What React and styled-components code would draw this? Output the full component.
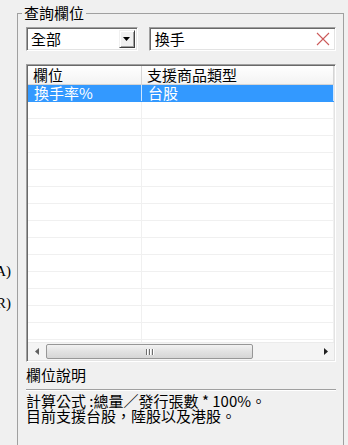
import React from "react";
import styled, { createGlobalStyle } from "styled-components";

const GlobalStyle = createGlobalStyle`
  html, body {
    margin: 0;
    padding: 0;
    background: #f0f0f0;
  }
  body {
    font-family: "Noto Sans CJK TC", "Liberation Sans", sans-serif;
    font-size: 15px;
    color: #000;
  }
`;

const Page = styled.div`
  display: flex;
  width: 348px;
  height: 445px;
  overflow: hidden;
`;

const SideColumn = styled.div`
  flex: none;
  width: 17px;
  display: flex;
  flex-direction: column;
  gap: 14px;
  padding-top: 262px;
  box-sizing: border-box;
`;

const SideLabel = styled.div`
  display: flex;
  justify-content: flex-end;
  overflow: hidden;
  width: 11px;
  height: 18px;
  line-height: 18px;
  white-space: nowrap;
  font-family: "Liberation Serif", serif;
  font-size: 15px;
`;

const GroupBox = styled.fieldset`
  flex: none;
  width: 327px;
  height: 460px;
  box-sizing: border-box;
  margin: 4px 0 0 0;
  padding: 5px 7px 0 8px;
  border: 1px solid #a0a0a0;
  min-width: 0;
`;

const Legend = styled.legend`
  margin-left: -4px;
  padding: 0 2px;
  line-height: 18px;
  font-size: 15px;
`;

const Toolbar = styled.div`
  display: flex;
  gap: 11px;
  height: 24px;
`;

const Sunken = styled.div`
  box-sizing: border-box;
  height: 24px;
  display: flex;
  align-items: center;
  background: #fff;
  border-top: 1px solid #a0a0a0;
  border-left: 1px solid #a0a0a0;
  border-right: 1px solid #fff;
  border-bottom: 1px solid #fff;
  box-shadow: inset 1px 1px 0 #696969, inset -1px -1px 0 #e3e3e3;
`;

const Combo = styled(Sunken)`
  width: 112px;
  padding: 2px 2px 2px 4px;
`;

const SearchBox = styled(Sunken)`
  width: 188px;
  padding: 2px 5px 2px 5px;
`;

const FieldText = styled.span`
  flex: 1;
  line-height: 18px;
`;

const DropButton = styled.div`
  width: 16px;
  height: 18px;
  box-sizing: border-box;
  background: #f0f0f0;
  border-top: 1px solid #f0f0f0;
  border-left: 1px solid #f0f0f0;
  border-right: 1px solid #404040;
  border-bottom: 1px solid #404040;
  box-shadow: inset 1px 1px 0 #fff, inset -1px -1px 0 #a0a0a0;
  display: flex;
  align-items: center;
  justify-content: center;
`;

const ListView = styled.div`
  margin-top: 13px;
  width: 310px;
  height: 298px;
  box-sizing: border-box;
  border-top: 1px solid #a0a0a0;
  border-left: 1px solid #a0a0a0;
  border-right: 1px solid #fff;
  border-bottom: 1px solid #fff;
  box-shadow: inset 1px 1px 0 #696969, inset -1px -1px 0 #e3e3e3;
  padding: 1px;
  background: #fff;
  display: flex;
  flex-direction: column;
  overflow: hidden;
`;

const Row = styled.div`
  display: flex;
  flex: none;
  height: ${(p) => (p.header ? 19 : 17)}px;
  box-sizing: border-box;
  line-height: ${(p) => (p.header ? 18 : 16)}px;
  background: ${(p) =>
    p.header ? "linear-gradient(#ffffff, #f3f3f3)" : p.selected ? "#3399ff" : "#fff"};
  color: ${(p) => (p.selected ? "#fff" : "#000")};
  border-bottom: 1px solid
    ${(p) => (p.header ? "#d5d5d5" : p.selected ? "#3399ff" : "#f0f0f0")};
`;

const Cell = styled.div`
  box-sizing: border-box;
  width: ${(p) => p.width}px;
  flex: ${(p) => (p.width ? "none" : "1")};
  padding-left: ${(p) => (p.header ? 5 : 6)}px;
  white-space: nowrap;
  border-right: 1px solid
    ${(p) => (p.header ? "#d5d5d5" : p.selected ? "#cfe6ff" : "#f0f0f0")};
`;

const Body = styled.div`
  flex: 1;
  display: flex;
  flex-direction: column;
  overflow: hidden;
`;

const ScrollBar = styled.div`
  flex: none;
  display: flex;
  height: 17px;
  background: #f4f4f4;
  border-top: 1px solid #ebebeb;
`;

const ArrowButton = styled.div`
  width: 17px;
  flex: none;
  display: flex;
  align-items: center;
  justify-content: center;
`;

const Track = styled.div`
  flex: 1;
  display: flex;
  align-items: center;
`;

const Thumb = styled.div`
  width: 207px;
  height: 15px;
  box-sizing: border-box;
  margin-left: 1px;
  border: 1px solid #979797;
  border-radius: 2px;
  background: linear-gradient(#f2f2f2, #e2e2e2 50%, #d6d6d6);
  display: flex;
  align-items: center;
  justify-content: center;
  gap: 1px;
`;

const Grip = styled.span`
  width: 1px;
  height: 6px;
  background: #6d6d6d;
  box-shadow: 1px 0 0 #fff;
  margin-right: 1px;
`;

const SectionLabel = styled.div`
  margin-top: 4px;
  line-height: 18px;
`;

const Divider = styled.div`
  margin-top: 5px;
  width: 310px;
  height: 1px;
  background: #a0a0a0;
  box-shadow: 0 1px 0 #fff;
`;

const Description = styled.div`
  margin-top: 3px;
  line-height: 15px;
  white-space: pre;
`;

const Arrow = ({ dir }) => (
  <svg width="4" height="7" viewBox="0 0 4 7">
    {dir === "left" ? (
      <path d="M4 0 L0 3.5 L4 7 Z" fill="#606060" />
    ) : (
      <path d="M0 0 L4 3.5 L0 7 Z" fill="#202020" />
    )}
  </svg>
);

const columns = [
  { title: "欄位", width: 114 },
  { title: "支援商品類型" },
];

const data = [["換手率%", "台股"]];

export default function App() {
  const emptyRows = Array.from({ length: 16 });

  return (
    <Page>
      <GlobalStyle />
      <SideColumn>
        <SideLabel>(A)</SideLabel>
        <SideLabel>(R)</SideLabel>
      </SideColumn>
      <GroupBox>
        <Legend>查詢欄位</Legend>
        <Toolbar>
          <Combo>
            <FieldText>全部</FieldText>
            <DropButton>
              <svg width="7" height="4" viewBox="0 0 7 4">
                <path d="M0 0 L7 0 L3.5 4 Z" fill="#000" />
              </svg>
            </DropButton>
          </Combo>
          <SearchBox>
            <FieldText>換手</FieldText>
            <svg width="14" height="14" viewBox="0 0 14 14">
              <path d="M1 1 L13 13 M13 1 L1 13" stroke="#cc5a5a" strokeWidth="1.1" fill="none" />
            </svg>
          </SearchBox>
        </Toolbar>

        <ListView>
          <Row header>
            {columns.map((c) => (
              <Cell header key={c.title} width={c.width}>
                {c.title}
              </Cell>
            ))}
          </Row>
          <Body>
            {data.map((r) => (
              <Row selected key={r[0]}>
                <Cell selected width={114}>{r[0]}</Cell>
                <Cell selected>{r[1]}</Cell>
              </Row>
            ))}
            {emptyRows.map((_, i) => (
              <Row key={i}>
                <Cell width={114} />
                <Cell />
              </Row>
            ))}
          </Body>
          <ScrollBar>
            <ArrowButton>
              <Arrow dir="left" />
            </ArrowButton>
            <Track>
              <Thumb>
                <Grip />
                <Grip />
                <Grip />
              </Thumb>
            </Track>
            <ArrowButton>
              <Arrow dir="right" />
            </ArrowButton>
          </ScrollBar>
        </ListView>

        <SectionLabel>欄位說明</SectionLabel>
        <Divider />
        <Description>
          {"計算公式 :總量／發行張數 * 100%。\n目前支援台股，陸股以及港股。"}
        </Description>
      </GroupBox>
    </Page>
  );
}
